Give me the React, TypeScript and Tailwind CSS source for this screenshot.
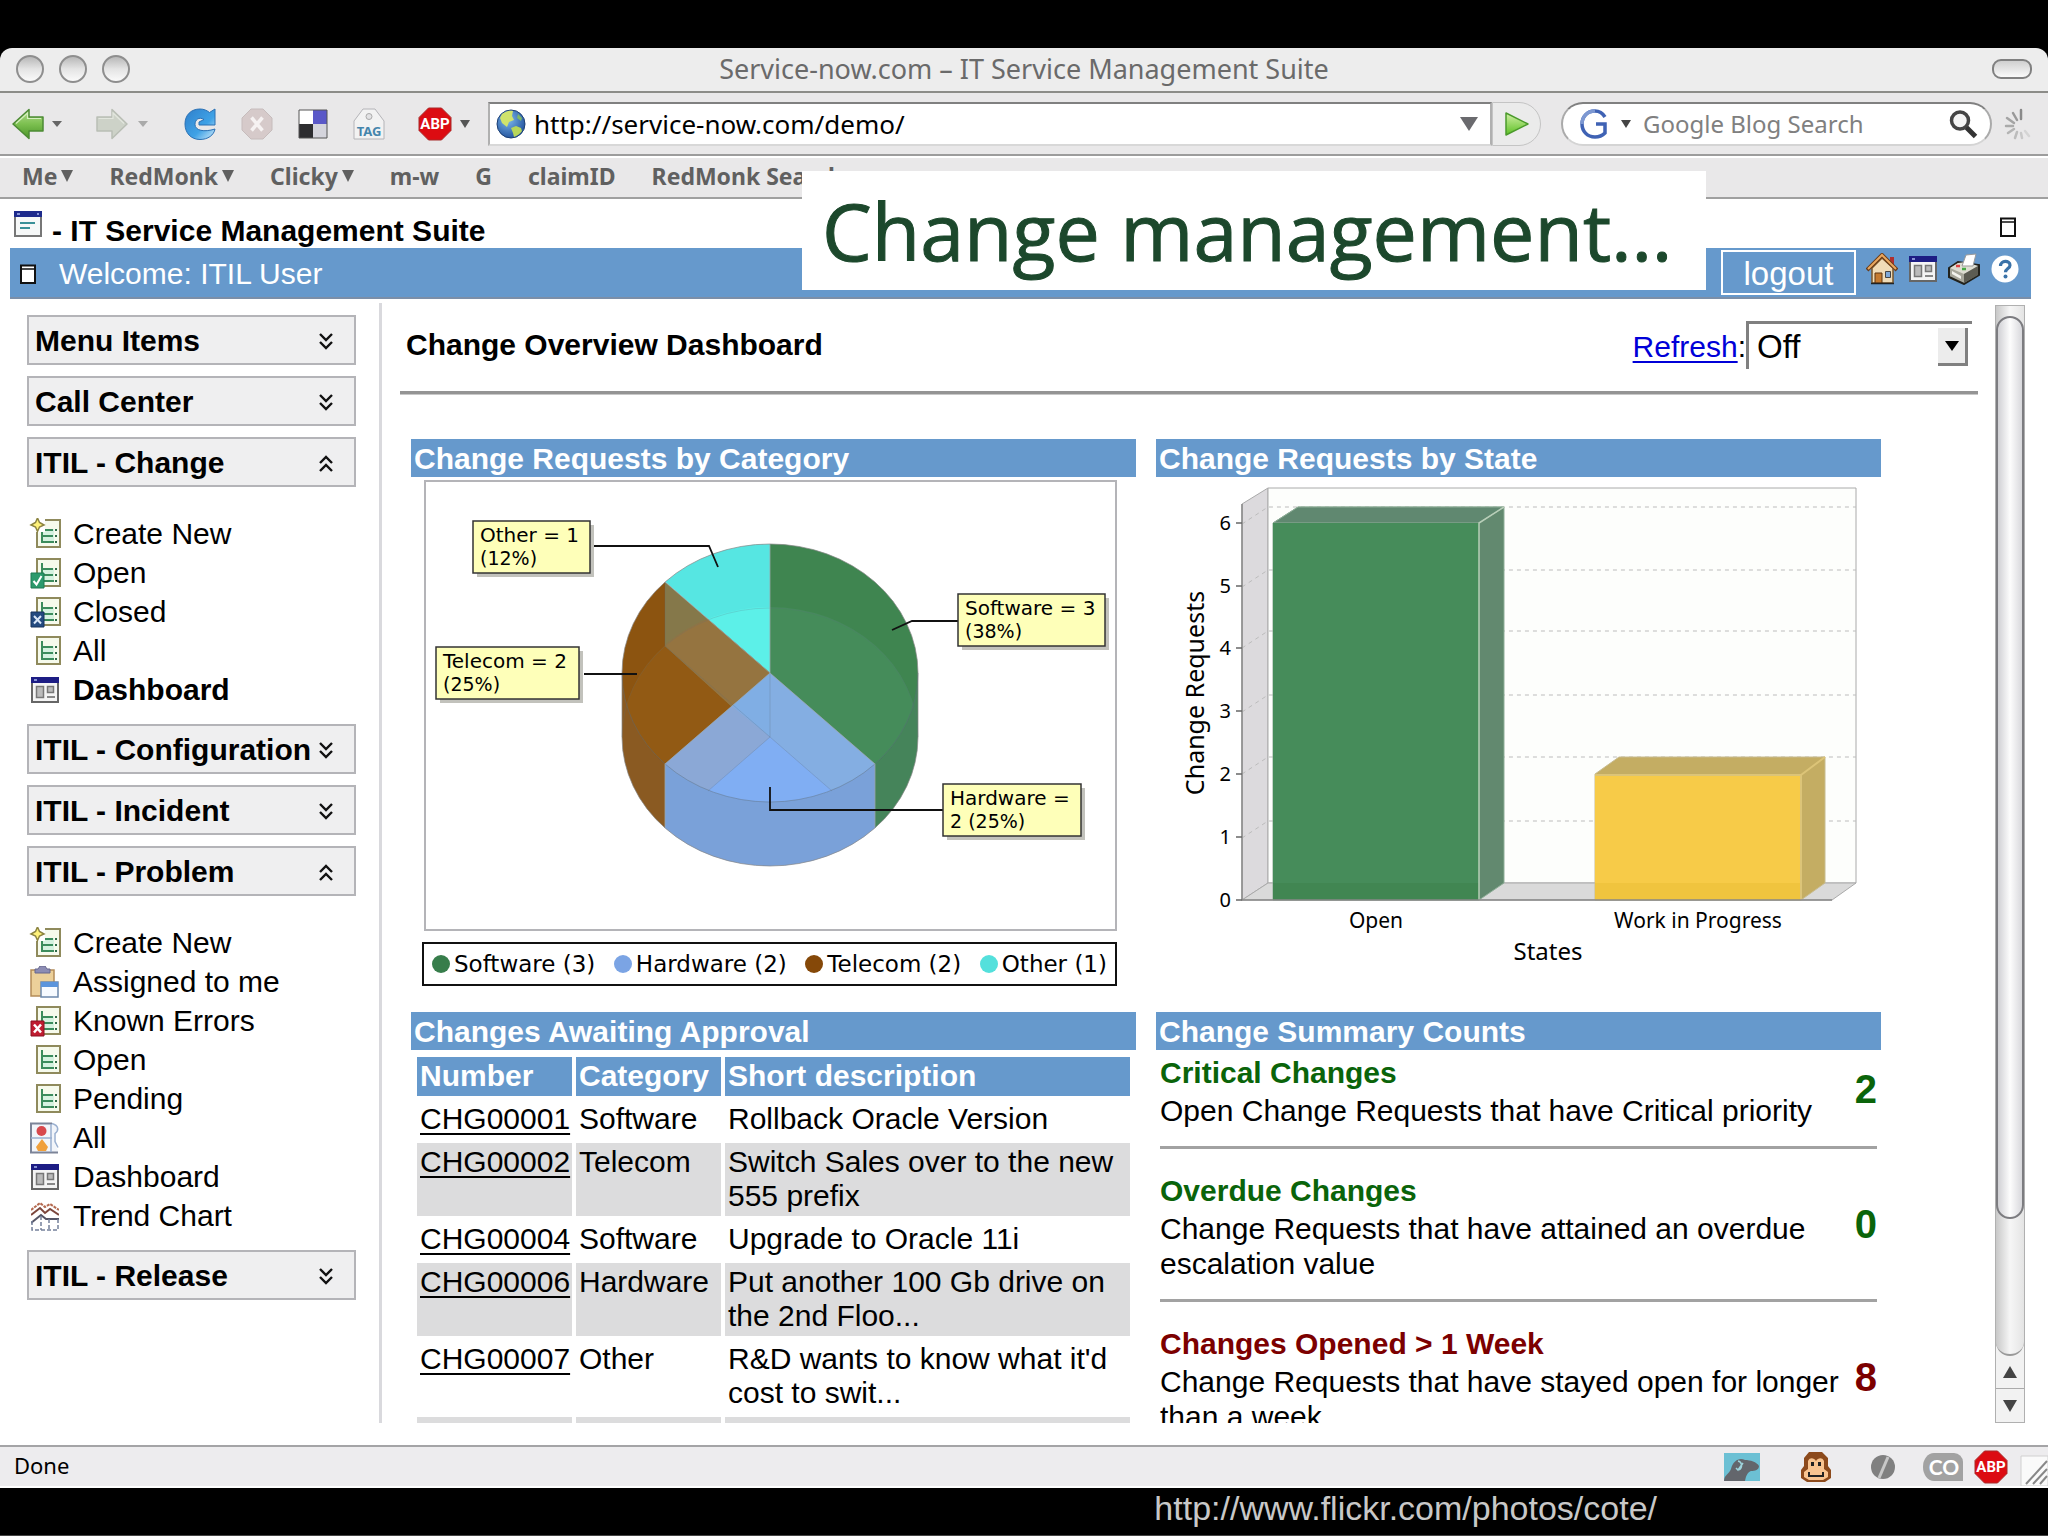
import React from "react";

type IconProps = { className?: string };

const Caret = ({ className = "" }: IconProps) => (
  <svg viewBox="0 0 12 12" preserveAspectRatio="none" className={className} fill="currentColor" aria-hidden="true">
    <path d="M0 0h12L6 12z" />
  </svg>
);

const BackIcon = () => (
  <svg viewBox="0 0 32 32" className="size-8" aria-hidden="true">
    <defs>
      <linearGradient id="back" x1="0" y1="0" x2="0" y2="1">
        <stop offset="0" stopColor="#b5dc90" />
        <stop offset=".5" stopColor="#7cc050" />
        <stop offset="1" stopColor="#4a9428" />
      </linearGradient>
    </defs>
    <path d="M1 16 17 1.500v7.500h14v14H17v7.500z" fill="url(#back)" stroke="#4c8a34" strokeWidth="1.500" strokeLinejoin="round" />
    <path d="M4 15.500 15.500 5v5.500H29" fill="none" stroke="#d4efbe" strokeWidth="1.200" />
  </svg>
);

const ForwardIcon = () => (
  <svg viewBox="0 0 32 32" className="size-8" aria-hidden="true">
    <path d="M31 16 16 1.500v7.500H1v14h15v7.500z" fill="#cdd2c8" stroke="#b9beb5" strokeWidth="1.500" strokeLinejoin="round" />
    <path d="M2.500 10.500H17V5l11 10.500" fill="none" stroke="#e2e6de" strokeWidth="1.200" />
  </svg>
);

const ReloadIcon = () => (
  <svg viewBox="0 0 32 32" className="size-8" aria-hidden="true">
    <defs>
      <linearGradient id="reload" x1="0" y1="0" x2="1" y2="1">
        <stop offset="0" stopColor="#2f7fcb" />
        <stop offset=".6" stopColor="#3fa2e6" />
        <stop offset="1" stopColor="#d5ecfa" />
      </linearGradient>
    </defs>
    <path
      d="M31 1v16H15v-3l5-2.500c-5-3-9 0-9 5 0 6 9 8 20 4.500C30 27 24 31.500 16 31.500 7 31.500 1 25 1 16S7 1 16 1c4 0 7 1.500 9.500 3.500z"
      fill="url(#reload)"
      stroke="#2a70b4"
      strokeWidth="1"
      strokeLinejoin="round"
    />
  </svg>
);

const StopIcon = () => (
  <svg viewBox="0 0 32 32" className="size-8" aria-hidden="true">
    <path d="M10 1h12l9 9v12l-9 9H10l-9-9V10z" fill="#d6caca" stroke="#c6bcbc" />
    <path d="m10.500 9.500 11 13m0-13-11 13" stroke="#f6f2f2" strokeWidth="3.500" />
  </svg>
);

const BlocksIcon = () => (
  <svg viewBox="0 0 30 30" className="size-[30px]" aria-hidden="true">
    <path d="M1 1h28v28H1z" fill="#fff" />
    <path d="M15 1h14v14H15z" fill="#5a58c8" />
    <path d="M1 15h14v14H1z" fill="#2d2d30" />
    <path d="M15 15h14v14H15z" fill="#d4d4dc" />
    <path d="M1 1h28v28H1z" fill="none" stroke="#555" />
  </svg>
);

const TagIcon = () => (
  <svg viewBox="0 0 32 32" className="size-8" aria-hidden="true">
    <path d="M1 31V13L10 1h12l9 12v18z" fill="#f2f2f2" stroke="#b4b4b8" />
    <circle cx="16" cy="8.500" r="3" fill="#e2e2e4" stroke="#aaa" />
    <text x="16" y="28" textAnchor="middle" fontFamily="Noto Sans, sans-serif" fontWeight="700" fontSize="13" fill="#4585ac">
      TAG
    </text>
  </svg>
);

const AbpIcon = () => (
  <svg viewBox="0 0 34 34" className="size-[34px]" aria-hidden="true">
    <path d="M10.500 1h13L33 10.500v13L23.500 33h-13L1 23.500v-13z" fill="#dc0c12" stroke="#a82a2a" />
    <text x="17" y="22" textAnchor="middle" fontFamily="Roboto, sans-serif" fontWeight="700" fontSize="15" fill="#fff">
      ABP
    </text>
  </svg>
);

const GlobeIcon = () => (
  <svg viewBox="0 0 30 30" className="size-[30px] shrink-0" aria-hidden="true">
    <defs>
      <radialGradient id="globe" cx=".4" cy=".35" r=".7">
        <stop offset="0" stopColor="#7db8ee" />
        <stop offset="1" stopColor="#1f4f9a" />
      </radialGradient>
    </defs>
    <circle cx="15" cy="15" r="14" fill="url(#globe)" stroke="#1c3f73" />
    <path d="M6 5c4-3 8-4 11-3l-1 5 2 4-5 2-2 5-5-4-2-5z" fill="#cfe36c" />
    <path d="M15 19l5-2 5 2 1 3c-2 3-5 5-8 6l-1-4z" fill="#b7d65a" />
    <path d="M22 5l4 4-1 3-4-3z" fill="#7fb866" />
  </svg>
);

const GoIcon = () => (
  <svg viewBox="0 0 26 26" className="size-[26px]" aria-hidden="true">
    <defs>
      <linearGradient id="go" x1="0" y1="0" x2="0" y2="1">
        <stop offset="0" stopColor="#d2f0a6" />
        <stop offset="1" stopColor="#5cc024" />
      </linearGradient>
    </defs>
    <path d="M2 2v22l22-11z" fill="url(#go)" stroke="#4b9a2c" strokeWidth="1.500" strokeLinejoin="round" />
  </svg>
);

const EngineIcon = () => (
  <svg viewBox="0 0 30 30" className="size-[30px]" aria-hidden="true">
    <path d="M26 8C23 3 19 2 16 2 8 2 3 8 3 15s5 13 13 13c5 0 8-2 10-4v-9h-9" fill="none" stroke="#3f62b4" strokeWidth="3.500" />
    <path d="M16 2C8 2 3 8 3 15" fill="none" stroke="#7d98d2" strokeWidth="3.500" />
  </svg>
);

const MagnifierIcon = () => (
  <svg viewBox="0 0 30 30" className="size-[30px]" aria-hidden="true">
    <circle cx="12" cy="11.500" r="8.500" fill="#f4f4f4" stroke="#444" strokeWidth="3.500" />
    <path d="m18.500 18.500 9 9" stroke="#333" strokeWidth="5" />
  </svg>
);

const Throbber = () => (
  <svg viewBox="0 0 32 32" className="size-8" aria-hidden="true" strokeWidth="2.500" strokeLinecap="round">
    <path d="M17 11V2" stroke="#8a8a8a" />
    <path d="m13 12-4-7" stroke="#999" />
    <path d="M10 15 3 10" stroke="#a4a4a4" />
    <path d="M9 18H2" stroke="#aaa" />
    <path d="m10 21-6 4" stroke="#b4b4b4" />
    <path d="m13 24-2 6" stroke="#bcbcbc" />
    <path d="m17 25 1 5" stroke="#c8c8c8" />
    <path d="m21 23 4 5" stroke="#d4d4d4" />
  </svg>
);

const Frame = ({ className = "" }: IconProps) => (
  <svg viewBox="0 0 16 20" className={`h-5 w-4 ${className}`} aria-hidden="true">
    <path d="M1 1.500h14v17.500H1z" fill="#fff" stroke="#111" strokeWidth="2" />
    <path d="M1 5h14" stroke="#111" strokeWidth="1.500" />
  </svg>
);

const AppWindowIcon = () => (
  <svg viewBox="0 0 28 26" className="h-[26px] w-7" aria-hidden="true">
    <path d="M1 1h26v24H1z" fill="#f6f8f8" stroke="#777" strokeWidth="2" />
    <path d="M0 0h28v6H0z" fill="#1d2a8c" />
    <path d="M3 3h3m17 0h2" stroke="#a8b8f0" strokeWidth="1.500" />
    <path d="M6 12h15M6 17h10" stroke="#3a9098" strokeWidth="2" />
  </svg>
);

const DashIcon = () => (
  <svg viewBox="0 0 28 26" className="h-[26px] w-7" aria-hidden="true">
    <path d="M1 1h26v24H1z" fill="#f4f4f4" stroke="#666" strokeWidth="2" />
    <path d="M0 0h28v6H0z" fill="#1d1d84" />
    <path d="M3 3h3" stroke="#a8b8f0" strokeWidth="1.500" />
    <path d="M5.500 9.500h7v11h-7zM16.500 9.500h6v6h-6z" fill="#bbb" stroke="#777" strokeWidth="1.500" />
    <path d="M16 20h8" stroke="#888" strokeWidth="2" />
  </svg>
);

const HouseIcon = () => (
  <svg viewBox="0 0 32 32" className="size-8" aria-hidden="true">
    <path d="M24 4h4v9h-4z" fill="#b03030" />
    <path d="M6 15v15h21V15L16 5z" fill="#f0dcb8" stroke="#7a5528" strokeWidth="1.500" />
    <path d="M1 17 16 2l15 15" fill="none" stroke="#6b3c18" strokeWidth="4" />
    <path d="M2 16 16 2l14 14" fill="none" stroke="#e8a860" strokeWidth="2" />
    <path d="M9 20h7v10H9z" fill="#c47a30" stroke="#5c3410" />
    <path d="M19.500 18.500h5v6h-5z" fill="#7ea8d8" stroke="#444" />
    <path d="M5 30.500h23" stroke="#222" strokeWidth="1.500" />
  </svg>
);

const PrinterIcon = () => (
  <svg viewBox="0 0 32 32" className="size-8" aria-hidden="true">
    <path d="m1 15 9-6 21 3v10L16 31 1 24z" fill="#a8a89c" stroke="#22221c" strokeWidth="2" />
    <path d="m2 15 14 6 14-8-12-4-8 1z" fill="#deded2" />
    <path d="M16 21v9l14-8v-9z" fill="#5c5c52" />
    <path d="m14 13 4-11 10-1-3 12z" fill="#fff" stroke="#999" />
    <path d="m4 18 9 5v3l-9-5z" fill="#f4f4ee" />
    <path d="M8 13h4" stroke="#d44" strokeWidth="2.500" />
    <path d="M14 16h4" stroke="#4a4" strokeWidth="2.500" />
  </svg>
);

const HelpIcon = () => (
  <svg viewBox="0 0 28 28" className="size-7" aria-hidden="true">
    <circle cx="14" cy="14" r="13.500" fill="#fff" />
    <path d="M9.500 11c0-6 9.500-6 9.500-.8 0 3.300-4.500 3.300-4.500 7" fill="none" stroke="#3a72a8" strokeWidth="3.200" />
    <circle cx="14.500" cy="21.500" r="2" fill="#3a72a8" />
  </svg>
);

type SheetBadge = "new" | "ok" | "closed" | "error";

const SheetIcon = ({ badge }: { badge?: SheetBadge }) => (
  <svg viewBox="0 0 32 32" className="size-8" aria-hidden="true">
    <path d="M8 2h23v27H8z" fill="#f6faec" stroke="#8f8a5c" strokeWidth="2" />
    <path d="M13 11h12v13H13z" fill="#d6f2e0" />
    <path d="M13 6v18h12M13 12h11M13 18h11" fill="none" stroke="#3c8c5c" strokeWidth="2" />
    <path d="M26 12h2m-2 6h2m-2 6h2" stroke="#2f6a48" strokeWidth="2" />
    {badge === "new" && (
      <>
        <path d="M1 0h15v14H1z" fill="#fff" />
        <path d="m8.500 0 2 4.500L15 7l-4.500 2-2 4.500-2-4.500L2 7l4.500-2.500z" fill="#fff27a" stroke="#8c8440" strokeWidth="1.500" />
      </>
    )}
    {badge === "ok" && (
      <>
        <path d="M2 16h13v15H2z" fill="#2c9a6c" stroke="#1d7a52" />
        <path d="m4.500 24 3 3.500 5-8.500" fill="none" stroke="#fff" strokeWidth="2" />
      </>
    )}
    {badge === "closed" && (
      <>
        <path d="M2 16h13v15H2z" fill="#234a80" stroke="#16335c" />
        <path d="m5 20 7 7.500m0-7.500-7 7.500" stroke="#d8e6f8" strokeWidth="2" />
      </>
    )}
    {badge === "error" && (
      <>
        <path d="M2 16h13v15H2z" fill="#c01c30" stroke="#8c1020" />
        <path d="m5 19.500 7 8m0-8-7 8" stroke="#fff" strokeWidth="2.500" />
      </>
    )}
  </svg>
);

const ClipboardIcon = () => (
  <svg viewBox="0 0 32 32" className="size-8" aria-hidden="true">
    <path d="M2 4h23v26H2z" fill="#ecd09a" stroke="#b48c58" strokeWidth="1.500" />
    <path d="M6 7V3h3l2-3h5l2 3h3v4z" fill="#8c8cb4" stroke="#66668c" />
    <path d="M12 16h17v15H12z" fill="#f6faff" stroke="#6c88ac" strokeWidth="1.500" />
    <path d="M12 16h17v5H12z" fill="#5a94dc" />
  </svg>
);

const PuzzleIcon = () => (
  <svg viewBox="0 0 32 32" className="size-8" aria-hidden="true">
    <path d="M2 1.500h23c4 2 4 7 1 9-2 4 0 7 0 11 1 4 3 5 3 9H2z" fill="#f2f5fa" />
    <path d="M29 30.500H2v-29h21" fill="none" stroke="#7c8498" strokeWidth="2" />
    <path d="M23 1.500c7 2 7 7 3 10v8l3 6M2 16h21M22 2v28" fill="none" stroke="#9ab0d0" strokeWidth="1.500" />
    <circle cx="12.500" cy="9" r="5" fill="#d8484c" />
    <path d="m13 17 6 8-2 4H9l-2-4z" fill="#f0a03c" />
  </svg>
);

const TrendIcon = () => (
  <svg viewBox="0 0 28 30" className="h-[30px] w-7" fill="none" aria-hidden="true">
    <path d="M0 9 9 2l5 4 5-3 9 6" stroke="#b46a50" strokeWidth="2" strokeDasharray="3 1" />
    <path d="m0 14 9-7 5 5 5-4 9 6" stroke="#7c463c" strokeWidth="2" />
    <path d="m0 22 10-8 5 4h13" stroke="#556" strokeWidth="2" />
    <path d="M1 20v9h26V18M10 15v14m8-11v11" stroke="#74809a" strokeWidth="1.500" strokeDasharray="4 2" />
  </svg>
);

const Chevrons = ({ up }: { up?: boolean }) => (
  <svg viewBox="0 0 16 18" className="h-[18px] w-4 shrink-0" fill="none" stroke="#111" strokeWidth="2.400" aria-hidden="true">
    {up ? <path d="m2 9 6-6 6 6M2 17l6-6 6 6" /> : <path d="m2 2 6 6 6-6M2 10l6 6 6-6" />}
  </svg>
);

type Item = { label: string; icon: React.ReactNode; active?: boolean };
type Section = { title: string; items?: Item[] };

const sections: Section[] = [
  { title: "Menu Items" },
  { title: "Call Center" },
  {
    title: "ITIL - Change",
    items: [
      { label: "Create New", icon: <SheetIcon badge="new" /> },
      { label: "Open", icon: <SheetIcon badge="ok" /> },
      { label: "Closed", icon: <SheetIcon badge="closed" /> },
      { label: "All", icon: <SheetIcon /> },
      { label: "Dashboard", icon: <DashIcon />, active: true },
    ],
  },
  { title: "ITIL - Configuration" },
  { title: "ITIL - Incident" },
  {
    title: "ITIL - Problem",
    items: [
      { label: "Create New", icon: <SheetIcon badge="new" /> },
      { label: "Assigned to me", icon: <ClipboardIcon /> },
      { label: "Known Errors", icon: <SheetIcon badge="error" /> },
      { label: "Open", icon: <SheetIcon /> },
      { label: "Pending", icon: <SheetIcon /> },
      { label: "All", icon: <PuzzleIcon /> },
      { label: "Dashboard", icon: <DashIcon /> },
      { label: "Trend Chart", icon: <TrendIcon /> },
    ],
  },
  { title: "ITIL - Release" },
];

const Sidebar = () => (
  <nav className="w-[382px] shrink-0 border-r-3 border-[#d9d9dd] pt-3 pr-[23px] pl-[27px]">
    {sections.map((s) => (
      <div key={s.title}>
        <button
          type="button"
          aria-expanded={!!s.items}
          className="flex h-[50px] w-full items-center justify-between border-2 border-[#b4b4b8] bg-[#efeff0] pt-0.5 pr-5 pl-1.5 text-left font-bold whitespace-nowrap"
        >
          {s.title}
          <Chevrons up={!!s.items} />
        </button>
        {s.items ? (
          <ul className="pt-[27px] pb-[15px]">
            {s.items.map((it) => (
              <li key={it.label}>
                <a href="#" className={`flex h-[39px] items-center gap-3 pl-0.5 ${it.active ? "font-bold" : ""}`}>
                  <span className="flex w-8 justify-center">{it.icon}</span>
                  {it.label}
                </a>
              </li>
            ))}
          </ul>
        ) : (
          <div className="h-[11px]" />
        )}
      </div>
    ))}
  </nav>
);

const Callout = ({ x, y, w, lines }: { x: number; y: number; w: number; lines: [string, string] }) => (
  <g>
    <rect x={x + 4} y={y + 4} width={w} height={52} fill="#c2c2bc" />
    <rect x={x} y={y} width={w} height={52} fill="#feffb9" stroke="#333" strokeWidth="1.500" />
    <text x={x + 7} y={y + 21} fontSize="20">{lines[0]}</text>
    <text x={x + 7} y={y + 44} fontSize="19">{lines[1]}</text>
  </g>
);

const PieChart = () => (
  <svg viewBox="2 2 689 447" className="block w-full" fontFamily="DejaVu Sans, sans-serif" role="img" aria-label="Change requests by category">
    <defs>
      <clipPath id="lowerDisc">
        <ellipse cx="346" cy="256" rx="148" ry="129" />
      </clipPath>
      <clipPath id="upperDisc">
        <ellipse cx="346" cy="193" rx="148" ry="129" />
      </clipPath>
    </defs>
    <path d="M198 193v64A148 129 0 0 0 241 348V284z" fill="#8a5a22" />
    <path d="M494 193v64A148 129 0 0 1 451 348V284z" fill="#45845a" />
    <path d="M241 284v64A148 129 0 0 0 451 348v-64z" fill="#7aa1d9" />
    <g clipPath="url(#upperDisc)">
      <path d="M346 193V0h347v520L451 284z" fill="#3f8550" />
      <path d="M346 193 100-21V-40h246z" fill="#56e6e2" />
      <path d="M346 193 241 102-40-150v700L241 284z" fill="#8c5410" />
      <path d="M346 193 241 284-60 545h812L451 284z" fill="#8aacdc" />
      <g clipPath="url(#lowerDisc)">
        <path d="M346 193V0h347v520L451 284z" fill="#458c5a" />
        <path d="M346 193 100-21V-40h246z" fill="#5cf0e8" />
        <path d="M346 193 241 102-40-150v700L241 284z" fill="#925a14" />
      </g>
      <path d="M346 193 241 102v64l66 60z" fill="#85784a" />
      <g clipPath="url(#lowerDisc)">
        <path d="M346 193 241 102v64l66 60z" fill="#957440" />
      </g>
      <path d="m346 193-105 91 40 50 65-77z" fill="#8ba8d6" />
      <path d="m346 193-38 33 38 31z" fill="#80aee4" />
      <path d="m346 193 105 91-40 50-65-77z" fill="#84aee2" />
      <path d="M346 257 210 375h272z" fill="#80aef3" />
    </g>
    <g fill="none" stroke="#5c6c7c" strokeOpacity=".45">
      <path d="M198 193A148 129 0 0 0 494 193" />
      <path d="M198 257A148 129 0 0 1 494 257" strokeOpacity=".2" />
      <path d="M346 193v64l-62 54M346 257l62 54M241 102v64l105 91" strokeOpacity=".25" />
      <path d="M346 64v129L241 102M241 348v-64l105-91 105 91v64" stroke="#98a4a8" strokeOpacity=".8" />
      <path d="M198 257v-64a148 129 0 0 1 296 0v64a148 129 0 0 1-296 0z" stroke="#888" strokeOpacity=".7" />
    </g>
    <g fill="none" stroke="#111" strokeWidth="1.800">
      <path d="M170 66h115l9 21M468 150l20-9h46M160 194h53M346 307v23h173" />
    </g>
    <Callout x={49} y={41} w={117} lines={["Other = 1", "(12%)"]} />
    <Callout x={12} y={167} w={143} lines={["Telecom = 2", "(25%)"]} />
    <Callout x={534} y={114} w={147} lines={["Software = 3", "(38%)"]} />
    <Callout x={519} y={304} w={138} lines={["Hardware =", "2 (25%)"]} />
  </svg>
);

const legend = [
  { label: "Software (3)", dot: "bg-[#377d4b]" },
  { label: "Hardware (2)", dot: "bg-[#7ba4e4]" },
  { label: "Telecom (2)", dot: "bg-[#854808]" },
  { label: "Other (1)", dot: "bg-[#54e0dc]" },
];

const gridLines = [30, 93, 154, 218, 280, 344];
const ticks = [
  { v: 6, y: 46 },
  { v: 5, y: 109 },
  { v: 4, y: 171 },
  { v: 3, y: 234 },
  { v: 2, y: 297 },
  { v: 1, y: 360 },
  { v: 0, y: 423 },
];

const BarChart = () => (
  <svg viewBox="0 0 725 520" className="block w-full" fontFamily="Noto Sans, sans-serif" role="img" aria-label="Change requests by state">
    <path d="M86 27 112 11v395l-26 17z" fill="#dcdadd" stroke="#aaa" />
    <path d="M112 11h588v395H112z" fill="#fdfefc" stroke="#aaa" />
    <path d="m86 423 26-17h588l-24 17z" fill="#dadada" stroke="#aaa" />
    <g stroke="#bcbcbc" strokeDasharray="4 4">
      {gridLines.map((y) => (
        <path key={y} d={`M86 ${y + 17}l26-17H700`} fill="none" />
      ))}
    </g>
    <path d="m117 46 25-16h206v376l-25 17H117z" fill="#62896f" stroke="#8fae98" />
    <path d="m117 46 25-16h206l-25 16z" fill="#608870" stroke="#8fae98" />
    <path d="M117 46h206v377H117z" fill="#468c5a" />
    <path d="M117 406h206v17H117z" fill="#418652" />
    <path d="M323 423V46l25-16" fill="none" stroke="#b8ceb8" strokeWidth="1.500" />
    <path d="m439 297 24-17h206v126l-24 17H439z" fill="#c4ad63" stroke="#c8bc90" />
    <path d="M439 297h206v126H439z" fill="#f7cb48" />
    <path d="M439 406h206v17H439z" fill="#f0c43e" />
    <path d="M439 298h206v125m0-125 24-18" fill="none" stroke="#dcc478" strokeWidth="2" />
    <path d="M86 27v396h590" fill="none" stroke="#888" strokeWidth="1.500" />
    <g fontSize="20" textAnchor="end">
      {ticks.map((t) => (
        <g key={t.v}>
          <path d={`M80 ${t.y}h6`} stroke="#666" strokeWidth="1.500" />
          <text x="75" y={t.y + 7}>{t.v}</text>
        </g>
      ))}
    </g>
    <g textAnchor="middle">
      <text x="220" y="451" fontSize="21">Open</text>
      <text x="542" y="451" fontSize="21">Work in Progress</text>
      <text x="392" y="483" fontSize="24">States</text>
      <text transform="translate(48 216) rotate(-90)" fontSize="25">Change Requests</text>
    </g>
  </svg>
);

const PanelTitle = ({ children }: { children: React.ReactNode }) => (
  <h2 className="h-[38px] bg-[#6699cc] pl-[3px] leading-10 font-bold whitespace-nowrap text-white">{children}</h2>
);

const rows = [
  ["CHG00001", "Software", "Rollback Oracle Version"],
  ["CHG00002", "Telecom", "Switch Sales over to the new 555 prefix"],
  ["CHG00004", "Software", "Upgrade to Oracle 11i"],
  ["CHG00006", "Hardware", "Put another 100 Gb drive on the 2nd Floo..."],
  ["CHG00007", "Other", "R&D wants to know what it'd cost to swit..."],
];

const ApprovalTable = () => (
  <table className="mx-0.5 mt-[3px] w-[721px] table-fixed border-separate border-spacing-1 text-left leading-[34px]">
    <colgroup>
      <col className="w-[155px]" />
      <col className="w-[145px]" />
      <col />
    </colgroup>
    <thead>
      <tr>
        {["Number", "Category", "Short description"].map((h) => (
          <th key={h} scope="col" className="bg-[#6699cc] px-[3px] pt-0.5 pb-[3px] font-bold text-white">
            {h}
          </th>
        ))}
      </tr>
    </thead>
    <tbody>
      {rows.map(([num, cat, desc]) => (
        <tr key={num} className="align-top even:[&>td]:bg-[#dcdcdd]">
          <td className="pt-0.5 pb-[3px] pl-[3px]">
            <a href="#" className="underline decoration-2 underline-offset-4">{num}</a>
          </td>
          <td className="pt-0.5 pb-[3px] pl-[3px]">{cat}</td>
          <td className="pt-0.5 pb-[3px] pl-[3px]">{desc}</td>
        </tr>
      ))}
      <tr className="h-[39px]">
        <td className="bg-[#dcdcdd]" />
        <td className="bg-[#dcdcdd]" />
        <td className="bg-[#dcdcdd]" />
      </tr>
    </tbody>
  </table>
);

const counts = [
  { title: "Critical Changes", desc: "Open Change Requests that have Critical priority", n: 2, tone: "text-[#0a640a]" },
  { title: "Overdue Changes", desc: "Change Requests that have attained an overdue escalation value", n: 0, tone: "text-[#0a640a]" },
  { title: "Changes Opened > 1 Week", desc: "Change Requests that have stayed open for longer than a week", n: 8, tone: "text-[#7c0000]" },
];

const SummaryCounts = () => (
  <div className="px-1 pt-[3px]">
    {counts.map((c, i) => (
      <section key={c.title} className={i > 0 ? "mt-[18px] border-t-3 border-[#a2a2a2] pt-[22px]" : ""}>
        <div className="flex items-center justify-between gap-2">
          <div className="leading-[35px]">
            <h3 className={`leading-10 font-bold ${c.tone}`}>{c.title}</h3>
            <p>{c.desc}</p>
          </div>
          <span className={`pb-1 text-[40px] leading-9 font-bold ${c.tone}`}>{c.n}</span>
        </div>
      </section>
    ))}
  </div>
);

const Dashboard = () => (
  <main className="min-w-0 flex-1 overflow-hidden pr-[17px] pl-[18px]">
    <div className="flex h-[91px] items-center justify-between border-b-3 border-[#949494] px-1.5 pb-1">
      <h1 className="font-bold">Change Overview Dashboard</h1>
      <div className="flex items-center">
        <label htmlFor="refresh" className="pt-1">
          <a href="#" className="text-[#0000d8] underline decoration-2 underline-offset-4">Refresh</a>:
        </label>
        <span className="relative block">
          <select
            id="refresh"
            className="h-12 w-[226px] appearance-none border-t-3 border-l-3 border-[#808080] bg-white pl-2 text-[33px] leading-10"
          >
            <option>Off</option>
            <option>30 seconds</option>
            <option>1 minute</option>
          </select>
          <span className="pointer-events-none absolute top-[7px] right-1 flex h-[38px] w-[30px] items-center justify-center border-r-3 border-b-3 border-[#808080] bg-[#ececec]">
            <Caret className="h-2.5 w-3.5" />
          </span>
        </span>
      </div>
    </div>
    <div className="grid grid-cols-2 gap-x-5 border-t border-[#c8c8c8] pt-11 pr-[97px] pl-[11px]">
      <section className="h-[573px]">
        <PanelTitle>Change Requests by Category</PanelTitle>
        <div className="mt-[3px] mr-[19px] ml-[13px] border-2 border-[#b4b4b8]">
          <PieChart />
        </div>
        <ul className="mt-[11px] mr-[19px] ml-[11px] flex h-11 items-center justify-between border-2 border-[#111] px-2 font-['DejaVu_Sans',sans-serif] text-[23px]">
          {legend.map((l) => (
            <li key={l.label} className="flex items-center gap-1 whitespace-nowrap">
              <span className={`size-[18px] rounded-full ${l.dot}`} />
              {l.label}
            </li>
          ))}
        </ul>
      </section>
      <section className="h-[573px]">
        <PanelTitle>Change Requests by State</PanelTitle>
        <BarChart />
      </section>
      <section>
        <PanelTitle>Changes Awaiting Approval</PanelTitle>
        <ApprovalTable />
      </section>
      <section>
        <PanelTitle>Change Summary Counts</PanelTitle>
        <SummaryCounts />
      </section>
    </div>
  </main>
);

const Scrollbar = () => (
  <div className="mt-0.5 mr-[23px] flex w-[30px] shrink-0 flex-col border border-[#b0b0b0] bg-[#f2f2f2]" aria-hidden="true">
    <div className="flex flex-1 flex-col rounded-b-full border-b-2 border-[#999] bg-linear-to-r from-[#c8c8c8] via-[#f6f6f6] to-[#e4e4e4] pt-2.5">
      <div className="h-[87%] rounded-full border-2 border-[#7c7c80] bg-linear-to-r from-[#d0d0d4] via-[#fdfdfd] to-[#d8d8dc]" />
    </div>
    <div className="flex h-[33px] items-center justify-center border-b border-[#aaa]">
      <Caret className="h-3 w-3.5 rotate-180 text-[#444]" />
    </div>
    <div className="flex h-[33px] items-center justify-center">
      <Caret className="h-3 w-3.5 text-[#444]" />
    </div>
  </div>
);

const TitleBar = () => (
  <div className="grid h-[45px] grid-cols-[1fr_auto_1fr] items-center rounded-t-xl border-b-2 border-[#8c8c88] bg-[#ededed] px-4 pb-0.5">
    <div className="flex gap-[15px]">
      {["Close", "Minimize", "Zoom"].map((n) => (
        <button
          key={n}
          type="button"
          aria-label={n}
          className="size-7 rounded-full border-2 border-[#8e8e8e] bg-linear-to-b from-[#b8b8b8] via-[#e4e4e4] to-[#fafafa]"
        />
      ))}
    </div>
    <div className="text-[27px] text-[#6a6a6a]">Service-now.com – IT Service Management Suite</div>
    <button
      type="button"
      aria-label="Toggle toolbar"
      className="h-5 w-10 justify-self-end rounded-[9px] border-2 border-[#808080] bg-linear-to-b from-[#d0d0d0] to-[#fafafa]"
    />
  </div>
);

const Toolbar = () => (
  <div className="flex h-[63px] items-center border-b-2 border-[#9c9c9c] bg-[#e9e8e9] px-3">
    <button type="button" aria-label="Back" className="flex items-center gap-2 text-[#666]">
      <BackIcon />
      <Caret className="h-1.5 w-2.5" />
    </button>
    <button type="button" aria-label="Forward" className="ml-[34px] flex items-center gap-2.5 text-[#aaa]">
      <ForwardIcon />
      <Caret className="h-1.5 w-2.5" />
    </button>
    <div className="ml-9 flex items-center gap-[25px]">
      <button type="button" aria-label="Reload"><ReloadIcon /></button>
      <button type="button" aria-label="Stop"><StopIcon /></button>
      <button type="button" aria-label="Bookmarks"><BlocksIcon /></button>
      <button type="button" aria-label="Tag this page"><TagIcon /></button>
    </div>
    <button type="button" aria-label="Adblock Plus" className="ml-[33px] flex items-center gap-2 text-[#555]">
      <AbpIcon />
      <Caret className="h-2 w-2.5" />
    </button>
    <div className="ml-[18px] flex h-11 flex-1 items-center border-2 border-t-[#808080] border-r-[#b0b0b0] border-b-[#d8d8d8] border-l-[#b0b0b0] bg-white pr-3 pl-1.5">
      <GlobeIcon />
      <input aria-label="Address" defaultValue="http://service-now.com/demo/" className="ml-2 min-w-0 flex-1 text-[26px] leading-9 outline-none" />
      <Caret className="h-3.5 w-[18px] text-[#6a6a6e]" />
    </div>
    <button type="button" aria-label="Go" className="flex h-11 w-[49px] items-center justify-center rounded-r-full border border-[#c4c4c4] bg-[#ebebeb]">
      <GoIcon />
    </button>
    <div className="ml-5 flex h-11 w-[431px] items-center rounded-full border-2 border-t-[#808080] border-r-[#aaa] border-b-[#d4d4d4] border-l-[#aaa] bg-white pr-3 pl-4">
      <EngineIcon />
      <Caret className="ml-3 h-2 w-2.5 text-[#444]" />
      <input aria-label="Search" placeholder="Google Blog Search" className="ml-3 min-w-0 flex-1 text-[24px] leading-8 outline-none placeholder:text-[#808080]" />
      <MagnifierIcon />
    </div>
    <span className="ml-3"><Throbber /></span>
  </div>
);

const bookmarks = [
  { label: "Me", menu: true },
  { label: "RedMonk", menu: true },
  { label: "Clicky", menu: true },
  { label: "m-w" },
  { label: "G" },
  { label: "claimID" },
  { label: "RedMonk Search" },
];

const BookmarksBar = () => (
  <div className="flex h-[43px] items-center gap-9 border-t-2 border-b-2 border-t-white border-b-[#a0a0a0] bg-[#e9e8e9] pb-1 pl-[22px] text-[23px] font-bold text-[#606060]">
    {bookmarks.map((b) => (
      <a key={b.label} href="#" className="flex items-center gap-1 whitespace-nowrap">
        {b.label}
        {b.menu && <Caret className="size-3" />}
      </a>
    ))}
  </div>
);

const PageHeader = () => (
  <header className="pr-[17px] pl-2.5">
    <div className="flex h-[49px] items-center justify-between pr-[15px] pl-1">
      <div className="flex items-center">
        <AppWindowIcon />
        <span className="ml-2.5 pt-3.5 font-bold">- IT Service Management Suite</span>
      </div>
      <Frame className="mt-1.5" />
    </div>
    <div className="flex h-[51px] items-center justify-between border-b-2 border-[#7c8fa8] bg-[#6699cc] pr-3 pl-2.5 text-white">
      <div className="flex items-center gap-[23px] pt-0.5">
        <Frame />
        <span>Welcome: ITIL User</span>
      </div>
      <div className="flex items-center gap-2.5">
        <button type="button" className="h-[45px] w-[135px] border-2 border-white pt-0.5 text-[33px] leading-9">logout</button>
        <div className="flex items-center gap-[11px] pb-2">
          <a href="#" aria-label="Home"><HouseIcon /></a>
          <a href="#" aria-label="Dashboards"><DashIcon /></a>
          <a href="#" aria-label="Print"><PrinterIcon /></a>
          <a href="#" aria-label="Help"><HelpIcon /></a>
        </div>
      </div>
    </div>
  </header>
);

const StatusBar = () => (
  <footer className="flex h-[43px] items-center justify-between border-t-2 border-b-2 border-t-[#a4a4a6] border-b-white bg-[#edecee] pl-3.5 font-['Noto_Sans',sans-serif] text-[22px]">
    <span className="pb-1">Done</span>
    <div className="flex h-full items-center">
      <svg viewBox="0 0 36 28" className="h-7 w-9" aria-hidden="true">
        <path d="M0 0h36v28H0z" fill="#6cc0d4" />
        <path d="M0 28c0-6 5-7 7-12C9 8 15 4 21 7c5 0 12 2 14 6 0 4-4 5-8 5-3 1-5 4-6 10z" fill="#63666c" />
        <path d="M14 8c4 1 5 6 1 9m-3-2 2 2 5-7" fill="none" stroke="#9ed4dc" strokeWidth="1.500" />
      </svg>
      <svg viewBox="0 0 32 32" className="ml-10 size-8" aria-hidden="true">
        <path d="M9 1h13l6 6v8l3 4v8l-6 4H7l-6-4v-8l3-4V7z" fill="#8c4a1c" />
        <path d="M8 10c2-4 6-3 8 0 2-3 6-4 8 0v8l4 3v5l-5 3H9l-5-3v-5l4-3z" fill="#f8c490" />
        <path d="M11 11h3v4h-3zM18 11h3v4h-3zM8 21h2v3h12v-3h2v5H8z" fill="#222" />
      </svg>
      <svg viewBox="0 0 26 26" className="ml-[38px] size-[26px]" aria-hidden="true">
        <circle cx="13" cy="13" r="12" fill="#808080" />
        <path d="M18 3 9 24" stroke="#c8c8c8" strokeWidth="3" />
      </svg>
      <svg viewBox="0 0 42 30" className="ml-[26px] h-[30px] w-[42px]" aria-hidden="true">
        <path d="M12 1h20a9 9 0 0 1 9 9v19H12a11 14 0 0 1 0-28z" fill="#a2a2a2" />
        <text x="22" y="23" textAnchor="middle" fontFamily="Lato, sans-serif" fontWeight="700" fontSize="21" fill="#fff">
          CO
        </text>
      </svg>
      <span className="ml-2.5"><AbpIcon /></span>
      <svg viewBox="0 0 28 34" className="ml-3 h-[34px] w-7 self-end" fill="none" aria-hidden="true">
        <path d="M1 4h27v30H1z" fill="#fafafa" stroke="#d0d0d0" />
        <path d="M6 32 27 9M13 32l14-15M20 32l7-8" stroke="#888" strokeWidth="2" />
      </svg>
    </div>
  </footer>
);

export default function App() {
  return (
    <div className="flex h-screen flex-col bg-black font-['Liberation_Sans',Arial,sans-serif] text-[30px] leading-9 text-black">
      <div className="relative mt-12 flex min-h-0 flex-1 flex-col bg-white">
        <div className="bg-black font-['Noto_Sans',sans-serif]">
          <TitleBar />
          <Toolbar />
          <BookmarksBar />
        </div>
        <div className="absolute top-[123px] left-[802px] flex h-[119px] w-[904px] items-center bg-white pl-5 font-['Open_Sans',sans-serif] text-[79px] leading-none whitespace-nowrap text-[#1c482c] [-webkit-text-stroke:1px_#1c482c]">
          Change management…
        </div>
        <PageHeader />
        <div className="mt-1 mb-[22px] flex min-h-0 flex-1">
          <Sidebar />
          <Dashboard />
          <Scrollbar />
        </div>
        <StatusBar />
      </div>
      <div className="flex h-12 shrink-0 justify-end border-b border-[#444] pr-[391px] text-[34px] leading-10 text-[#c8c8c8]">
        <a href="#">http://www.flickr.com/photos/cote/</a>
      </div>
    </div>
  );
}
